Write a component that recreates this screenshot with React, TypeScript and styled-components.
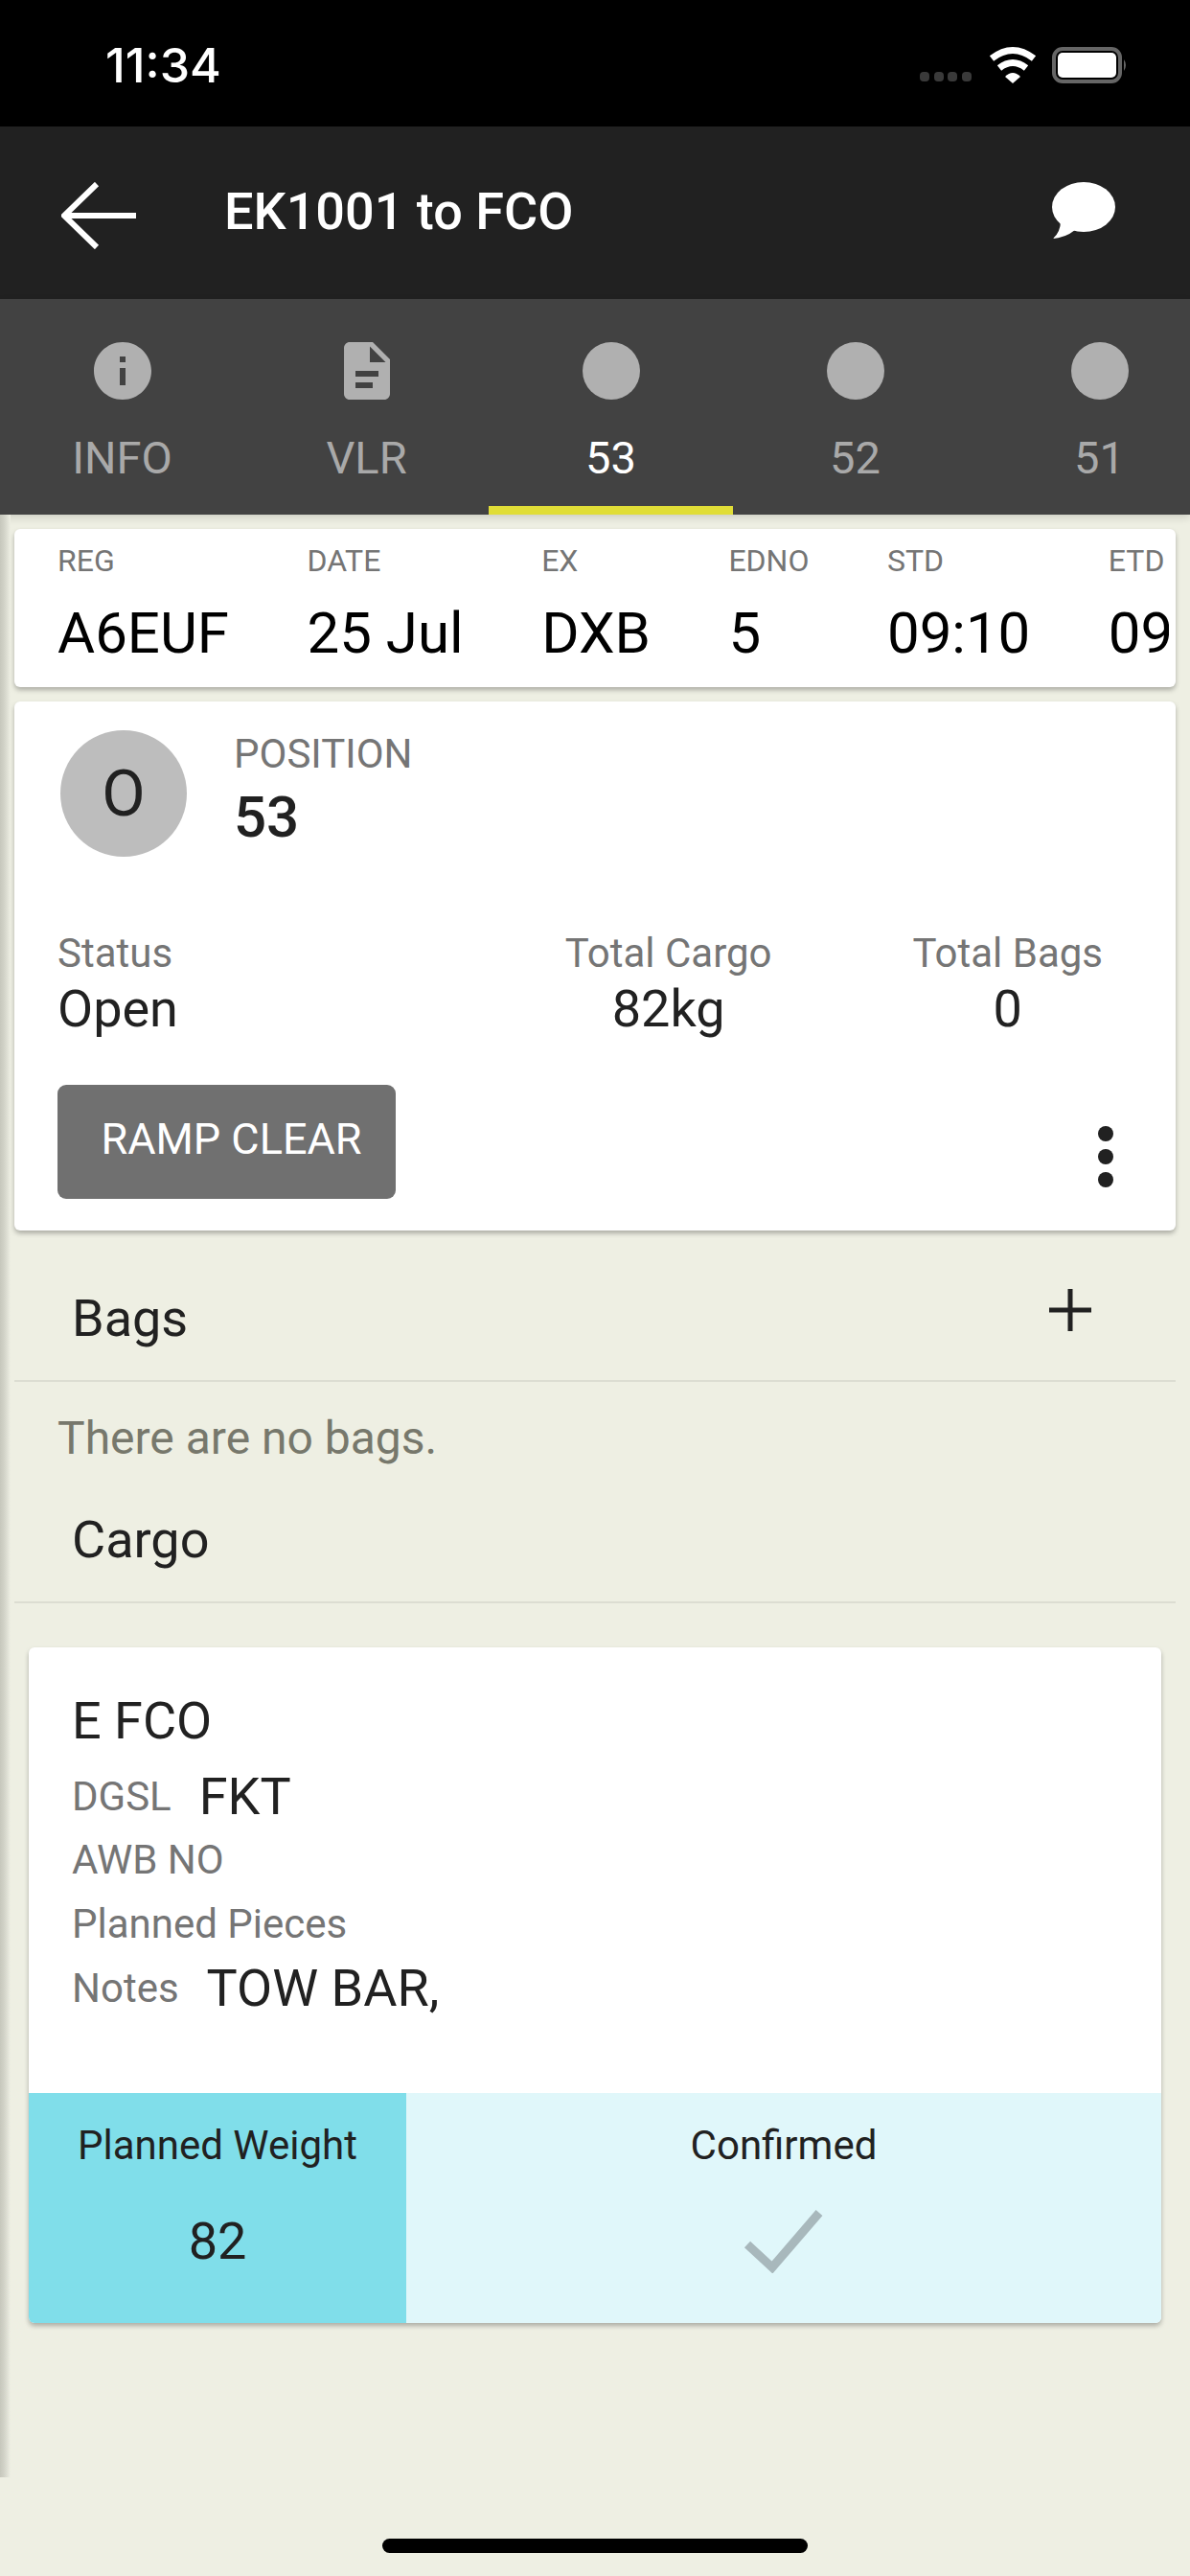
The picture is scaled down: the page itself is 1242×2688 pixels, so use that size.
import styled, { createGlobalStyle } from 'styled-components';

const GlobalStyle = createGlobalStyle`
  html, body {
    margin: 0;
    padding: 0;
    background: #eeefe3;
  }
  * {
    box-sizing: border-box;
  }
`;

const Screen = styled.div`
  position: relative;
  width: 1242px;
  height: 2688px;
  overflow: hidden;
  background: #eeefe3;
  font-family: Roboto, 'Liberation Sans', sans-serif;
  color: #212121;
`;

const StatusBar = styled.div`
  height: 132px;
  background: #000;
  display: flex;
  align-items: flex-start;
  justify-content: space-between;
  padding: 40px 66px 0 110px;
`;

const Clock = styled.span`
  font-family: Inter, sans-serif;
  font-size: 50px;
  font-weight: 500;
  line-height: 56px;
  color: #fff;
`;

const StatusIcons = styled.svg`
  width: 220px;
  height: 60px;
`;

const AppBar = styled.header`
  height: 180px;
  background: #212121;
  display: flex;
  align-items: center;
  padding: 0 78px 0 64px;
  color: #fff;
`;

const BackIcon = styled.svg`
  width: 78px;
  height: 70px;
  margin-top: 6px;
  fill: none;
  stroke: #fff;
  stroke-width: 6px;
`;

const Title = styled.h1`
  flex: 1;
  margin: -3px 0 0 92px;
  font-size: 54px;
  font-weight: 500;
`;

const ChatIcon = styled.svg`
  width: 66px;
  height: 60px;
  margin-top: -4px;
  fill: #fff;
`;

const Tabs = styled.nav`
  position: relative;
  height: 225px;
  background: #424242;
  display: flex;
  overflow: hidden;
  box-shadow: 0 3px 8px rgba(0, 0, 0, 0.14);
`;

const Tab = styled.div<{ $active?: boolean }>`
  flex: 0 0 255px;
  display: flex;
  flex-direction: column;
  align-items: center;
  padding-top: 39px;
  border-bottom: 9px solid ${({ $active }) => ($active ? '#e0dd37' : 'transparent')};
`;

const TabIcon = styled.svg`
  width: 72px;
  height: 72px;
  fill: #b0b0b0;
`;

const TabLabel = styled.span<{ $active?: boolean }>`
  margin-top: 25px;
  font-size: 47px;
  line-height: 60px;
  color: ${({ $active }) => ($active ? '#fff' : '#a9a9a9')};
`;

const Content = styled.main`
  padding: 15px 15px 0;
  display: flex;
  flex-direction: column;
`;

const Card = styled.section`
  background: #fff;
  border-radius: 6px;
  box-shadow: 0 3px 5px rgba(0, 0, 0, 0.28);
`;

const FlightCard = styled(Card)`
  height: 165px;
  padding: 15px 7px 0 45px;
`;

const FlightScroller = styled.div`
  display: flex;
  gap: 81.5px;
  overflow: hidden;
`;

const FlightField = styled.div`
  flex: none;
  display: flex;
  flex-direction: column;
`;

const FlightLabel = styled.span`
  font-size: 32px;
  line-height: 36px;
  color: #757575;
`;

const FlightValue = styled.span`
  margin-top: 24px;
  font-size: 60px;
  line-height: 68px;
  color: #000;
`;

const PositionCard = styled(Card)`
  height: 552px;
  margin-top: 15px;
  padding: 30px 45px 0;
`;

const PositionRow = styled.div`
  display: flex;
  gap: 49px;
  margin-left: 3px;
`;

const Avatar = styled.div`
  width: 132px;
  height: 132px;
  border-radius: 50%;
  background: #bdbdbd;
  display: flex;
  align-items: center;
  justify-content: center;
  font-size: 66px;
`;

const PositionLabel = styled.div`
  font-size: 42px;
  line-height: 50px;
  color: #757575;
`;

const PositionValue = styled.div`
  margin-top: 6px;
  font-size: 60px;
  line-height: 70px;
  font-weight: 500;
`;

const StatsRow = styled.div`
  display: flex;
  gap: 147px;
  margin-top: 76px;
  padding-right: 31px;
`;

const Stat = styled.div<{ $grow?: boolean }>`
  display: flex;
  flex-direction: column;
  flex: ${({ $grow }) => ($grow ? 1 : 'none')};
  align-items: ${({ $grow }) => ($grow ? 'flex-start' : 'center')};
`;

const StatLabel = styled.span`
  font-size: 42px;
  line-height: 50px;
  color: #757575;
`;

const StatValue = styled.span`
  font-size: 54px;
  line-height: 66px;
`;

const ActionRow = styled.div`
  display: flex;
  align-items: flex-start;
  justify-content: space-between;
  margin-top: 46px;
  padding-right: 20px;
`;

const RampButton = styled.button`
  width: 353px;
  height: 119px;
  padding: 0 0 6px 10px;
  border: none;
  border-radius: 9px;
  background: #707070;
  color: #fff;
  font-family: inherit;
  font-size: 45px;
`;

const Kebab = styled.svg`
  width: 16px;
  height: 64px;
  margin-top: 43px;
  fill: #212121;
`;

const SectionHeader = styled.div<{ $first?: boolean }>`
  display: flex;
  align-items: center;
  justify-content: space-between;
  height: ${({ $first }) => ($first ? '158px' : '104px')};
  padding: ${({ $first }) => ($first ? '27px 88px 0 60px' : '0 88px 28px 60px')};
  border-bottom: 2px solid #dcddd2;
  font-size: 54px;
`;

const PlusIcon = styled.svg`
  width: 44px;
  height: 44px;
  margin-top: -18px;
  stroke: #212121;
  stroke-width: 5px;
`;

const EmptyText = styled.div`
  padding: 29px 45px 0;
  height: 127px;
  font-size: 48px;
  line-height: 60px;
  color: #77786c;
`;

const CargoCard = styled(Card)`
  margin: 46px 15px 0;
  height: 705px;
  display: flex;
  flex-direction: column;
  overflow: hidden;
`;

const CargoBody = styled.div`
  flex: 1;
  padding: 44px 45px 0;
`;

const CargoTitle = styled.div`
  margin-bottom: 12px;
  font-size: 54px;
  line-height: 66px;
`;

const CargoLine = styled.div`
  display: flex;
  align-items: center;
  height: 66.6px;
  gap: 29px;
`;

const CargoLabel = styled.span`
  font-size: 42px;
  color: #757575;
`;

const CargoValue = styled.span`
  font-size: 54px;
`;

const WeightRow = styled.div`
  display: flex;
  height: 240px;
`;

const WeightCell = styled.div<{ $tone: string; $wide?: boolean }>`
  flex: ${({ $wide }) => ($wide ? 1 : '0 0 394px')};
  background: ${({ $tone }) => $tone};
  display: flex;
  flex-direction: column;
  align-items: center;
  padding-top: 30px;
`;

const WeightLabel = styled.span`
  font-size: 42px;
  line-height: 50px;
`;

const WeightValue = styled.span`
  margin-top: 43px;
  font-size: 54px;
  line-height: 64px;
`;

const CheckIcon = styled.svg`
  width: 84px;
  height: 66px;
  margin-top: 42px;
  fill: none;
  stroke: #a8b8bc;
  stroke-width: 9px;
`;

const DrawerEdge = styled.div`
  position: absolute;
  left: 0;
  top: 537px;
  width: 11px;
  height: 2048px;
  background: linear-gradient(to right, #c6c7bc, #d4d5ca 45%, #eeefe3);
`;

const HomeIndicator = styled.div`
  position: absolute;
  left: 399px;
  bottom: 24px;
  width: 444px;
  height: 15px;
  border-radius: 8px;
  background: #000;
`;

const flightFields = [
  ['REG', 'A6EUF'],
  ['DATE', '25 Jul'],
  ['EX', 'DXB'],
  ['EDNO', '5'],
  ['STD', '09:10'],
  ['ETD', '09:10'],
];

export default function App() {
  return (
    <Screen>
      <GlobalStyle />
      <StatusBar>
        <Clock>11:34</Clock>
        <StatusIcons viewBox="0 0 220 60">
          <g fill="#3a3a3a">
            <rect x="4" y="35" width="10" height="10" rx="4" />
            <rect x="19" y="35" width="10" height="10" rx="4" />
            <rect x="33" y="35" width="10" height="10" rx="4" />
            <rect x="48" y="35" width="10" height="10" rx="4" />
          </g>
          <g fill="none" stroke="#fff" strokeWidth="7">
            <path d="M79 21 Q101 4 123 21" />
            <path d="M87 31 Q101 20 115 31" />
          </g>
          <path d="M93 40 Q101 32 109 40 L101 47 Z" fill="#fff" />
          <rect x="144" y="11" width="69" height="34" rx="9" fill="none" stroke="#666" strokeWidth="4" />
          <rect x="148" y="15" width="61" height="26" rx="5" fill="#fff" />
          <path d="M217 22 Q221 28 217 34 Z" fill="#666" />
        </StatusIcons>
      </StatusBar>
      <AppBar>
        <BackIcon viewBox="0 0 78 70">
          <path d="M37 2 L3 35 L37 68 M3 35 H78" />
        </BackIcon>
        <Title>EK1001 to FCO</Title>
        <ChatIcon viewBox="0 0 66 60">
          <ellipse cx="33" cy="26" rx="33" ry="26" />
          <path d="M9 40 Q9 52 1 59 Q14 58 24 50 Z" />
        </ChatIcon>
      </AppBar>
      <Tabs>
        <Tab>
          <TabIcon viewBox="0 0 24 24">
            <path d="M12 2C6.48 2 2 6.48 2 12s4.48 10 10 10 10-4.48 10-10S17.52 2 12 2zm1 15h-2v-6h2v6zm0-8h-2V7h2v2z" />
          </TabIcon>
          <TabLabel>INFO</TabLabel>
        </Tab>
        <Tab>
          <TabIcon viewBox="0 0 24 24">
            <path d="M14 2H6c-1.1 0-1.99.9-1.99 2L4 20c0 1.1.89 2 1.99 2H18c1.1 0 2-.9 2-2V8l-6-6zm-6 12v-2h8v2H8zm0 4v-2h6v2H8zm5-9V3.5L18.5 9H13z" />
          </TabIcon>
          <TabLabel>VLR</TabLabel>
        </Tab>
        {['53', '52', '51'].map((pos) => (
          <Tab key={pos} $active={pos === '53'}>
            <TabIcon viewBox="0 0 24 24">
              <circle cx="12" cy="12" r="10" />
            </TabIcon>
            <TabLabel $active={pos === '53'}>{pos}</TabLabel>
          </Tab>
        ))}
      </Tabs>
      <Content>
        <FlightCard>
          <FlightScroller>
            {flightFields.map(([label, value]) => (
              <FlightField key={label}>
                <FlightLabel>{label}</FlightLabel>
                <FlightValue>{value}</FlightValue>
              </FlightField>
            ))}
          </FlightScroller>
        </FlightCard>
        <PositionCard>
          <PositionRow>
            <Avatar>O</Avatar>
            <div>
              <PositionLabel>POSITION</PositionLabel>
              <PositionValue>53</PositionValue>
            </div>
          </PositionRow>
          <StatsRow>
            <Stat $grow>
              <StatLabel>Status</StatLabel>
              <StatValue>Open</StatValue>
            </Stat>
            <Stat>
              <StatLabel>Total Cargo</StatLabel>
              <StatValue>82kg</StatValue>
            </Stat>
            <Stat>
              <StatLabel>Total Bags</StatLabel>
              <StatValue>0</StatValue>
            </Stat>
          </StatsRow>
          <ActionRow>
            <RampButton>RAMP CLEAR</RampButton>
            <Kebab viewBox="0 0 16 64">
              <circle cx="8" cy="8" r="8" />
              <circle cx="8" cy="32" r="8" />
              <circle cx="8" cy="56" r="8" />
            </Kebab>
          </ActionRow>
        </PositionCard>
        <SectionHeader $first>
          Bags
          <PlusIcon viewBox="0 0 44 44">
            <path d="M22 0 V44 M0 22 H44" />
          </PlusIcon>
        </SectionHeader>
        <EmptyText>There are no bags.</EmptyText>
        <SectionHeader>Cargo</SectionHeader>
        <CargoCard>
          <CargoBody>
            <CargoTitle>E FCO</CargoTitle>
            <CargoLine>
              <CargoLabel>DGSL</CargoLabel>
              <CargoValue>FKT</CargoValue>
            </CargoLine>
            <CargoLine>
              <CargoLabel>AWB NO</CargoLabel>
            </CargoLine>
            <CargoLine>
              <CargoLabel>Planned Pieces</CargoLabel>
            </CargoLine>
            <CargoLine>
              <CargoLabel>Notes</CargoLabel>
              <CargoValue>TOW BAR,</CargoValue>
            </CargoLine>
          </CargoBody>
          <WeightRow>
            <WeightCell $tone="#80deea">
              <WeightLabel>Planned Weight</WeightLabel>
              <WeightValue>82</WeightValue>
            </WeightCell>
            <WeightCell $tone="#e0f7fa" $wide>
              <WeightLabel>Confirmed</WeightLabel>
              <CheckIcon viewBox="0 0 84 66">
                <path d="M4 36 L30 60 L79 3" />
              </CheckIcon>
            </WeightCell>
          </WeightRow>
        </CargoCard>
      </Content>
      <DrawerEdge />
      <HomeIndicator />
    </Screen>
  );
}
